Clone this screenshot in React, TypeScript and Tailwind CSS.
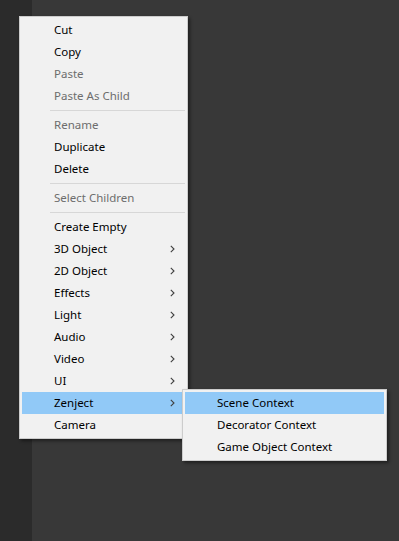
import React from "react";

type Item =
  | { kind: "sep" }
  | { kind: "item"; label: string; disabled?: boolean; sub?: boolean; active?: boolean };

const mainItems: Item[] = [
  { kind: "item", label: "Cut" },
  { kind: "item", label: "Copy" },
  { kind: "item", label: "Paste", disabled: true },
  { kind: "item", label: "Paste As Child", disabled: true },
  { kind: "sep" },
  { kind: "item", label: "Rename", disabled: true },
  { kind: "item", label: "Duplicate" },
  { kind: "item", label: "Delete" },
  { kind: "sep" },
  { kind: "item", label: "Select Children", disabled: true },
  { kind: "sep" },
  { kind: "item", label: "Create Empty" },
  { kind: "item", label: "3D Object", sub: true },
  { kind: "item", label: "2D Object", sub: true },
  { kind: "item", label: "Effects", sub: true },
  { kind: "item", label: "Light", sub: true },
  { kind: "item", label: "Audio", sub: true },
  { kind: "item", label: "Video", sub: true },
  { kind: "item", label: "UI", sub: true },
  { kind: "item", label: "Zenject", sub: true, active: true },
  { kind: "item", label: "Camera" },
];

const subItems = ["Scene Context", "Decorator Context", "Game Object Context"];

function Chevron() {
  return (
    <svg width="5" height="8" viewBox="0 0 5 8" className="shrink-0">
      <path d="M0.8 0.8 L4 4 L0.8 7.2" fill="none" stroke="#404040" strokeWidth="1.1" />
    </svg>
  );
}

export default function App() {
  return (
    <div
      className="relative flex w-[399px] h-[541px] overflow-hidden text-[11.5px] leading-none"
      style={{ fontFamily: '"Noto Sans", "Open Sans", sans-serif' }}
    >
      <div className="w-[32px] h-full bg-[#2b2b2b]" />
      <div className="flex-1 h-full bg-[#383838]" />

      {/* main menu */}
      <div className="absolute left-[19px] top-[16px] w-[169px] border border-[#cccccc] bg-[#f1f1f1] px-[2px] py-[2px] shadow-[2px_2px_3px_rgba(0,0,0,0.45)]">
        {mainItems.map((it, i) =>
          it.kind === "sep" ? (
            <div key={i} className="h-[7px] flex items-center pl-[28px]">
              <div className="h-px w-full bg-[#d7d7d7]" />
            </div>
          ) : (
            <div
              key={i}
              className={`h-[22px] flex items-center pl-[32px] pr-[10px] ${
                it.active ? "bg-[#91c9f7]" : ""
              } ${it.disabled ? "text-[#6d6d6d]" : "text-black"}`}
            >
              <span className="flex-1">{it.label}</span>
              {it.sub && <Chevron />}
            </div>
          )
        )}
      </div>

      {/* submenu */}
      <div className="absolute left-[182px] top-[389px] w-[205px] border border-[#cccccc] bg-[#f1f1f1] px-[2px] py-[2px] shadow-[2px_2px_3px_rgba(0,0,0,0.45)]">
        {subItems.map((s, i) => (
          <div
            key={s}
            className={`h-[22px] flex items-center pl-[32px] text-black ${i === 0 ? "bg-[#91c9f7]" : ""}`}
          >
            {s}
          </div>
        ))}
      </div>
    </div>
  );
}
